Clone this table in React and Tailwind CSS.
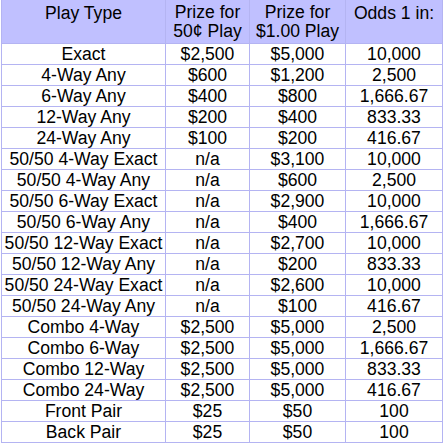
import React from "react";

const rows = [
  ["Exact", "$2,500", "$5,000", "10,000"],
  ["4-Way Any", "$600", "$1,200", "2,500"],
  ["6-Way Any", "$400", "$800", "1,666.67"],
  ["12-Way Any", "$200", "$400", "833.33"],
  ["24-Way Any", "$100", "$200", "416.67"],
  ["50/50 4-Way Exact", "n/a", "$3,100", "10,000"],
  ["50/50 4-Way Any", "n/a", "$600", "2,500"],
  ["50/50 6-Way Exact", "n/a", "$2,900", "10,000"],
  ["50/50 6-Way Any", "n/a", "$400", "1,666.67"],
  ["50/50 12-Way Exact", "n/a", "$2,700", "10,000"],
  ["50/50 12-Way Any", "n/a", "$200", "833.33"],
  ["50/50 24-Way Exact", "n/a", "$2,600", "10,000"],
  ["50/50 24-Way Any", "n/a", "$100", "416.67"],
  ["Combo 4-Way", "$2,500", "$5,000", "2,500"],
  ["Combo 6-Way", "$2,500", "$5,000", "1,666.67"],
  ["Combo 12-Way", "$2,500", "$5,000", "833.33"],
  ["Combo 24-Way", "$2,500", "$5,000", "416.67"],
  ["Front Pair", "$25", "$50", "100"],
  ["Back Pair", "$25", "$50", "100"],
];

export default function App() {
  return (
    <div className="w-[445px] h-[446px] overflow-hidden bg-white">
      <div
        className="ml-px mt-[-1px] w-[442px] grid grid-cols-[163px_83px_95px_96px] gap-px p-px bg-[#b4b4f2] text-black text-[17.6px]"
        style={{ fontFamily: '"Liberation Sans", Arial, sans-serif' }}
      >
        <div className="h-[43px] bg-[#c0c0ff] flex items-start justify-center pt-[3px] leading-[20px]">
          Play Type
        </div>
        <div className="h-[43px] bg-[#c0c0ff] flex flex-col items-center justify-center leading-[19px] pt-[1px]">
          <span>Prize for</span>
          <span>50¢ Play</span>
        </div>
        <div className="h-[43px] bg-[#c0c0ff] flex flex-col items-center justify-center leading-[19px] pt-[1px]">
          <span>Prize for</span>
          <span>$1.00 Play</span>
        </div>
        <div className="h-[43px] bg-[#c0c0ff] flex items-start justify-center pt-[3px] leading-[20px]">
          Odds 1 in:
        </div>
        {rows.map((r, i) =>
          r.map((c, j) => (
            <div
              key={i + "-" + j}
              className="h-5 bg-white flex items-center justify-center leading-5 whitespace-nowrap"
            >
              {c}
            </div>
          ))
        )}
      </div>
    </div>
  );
}
